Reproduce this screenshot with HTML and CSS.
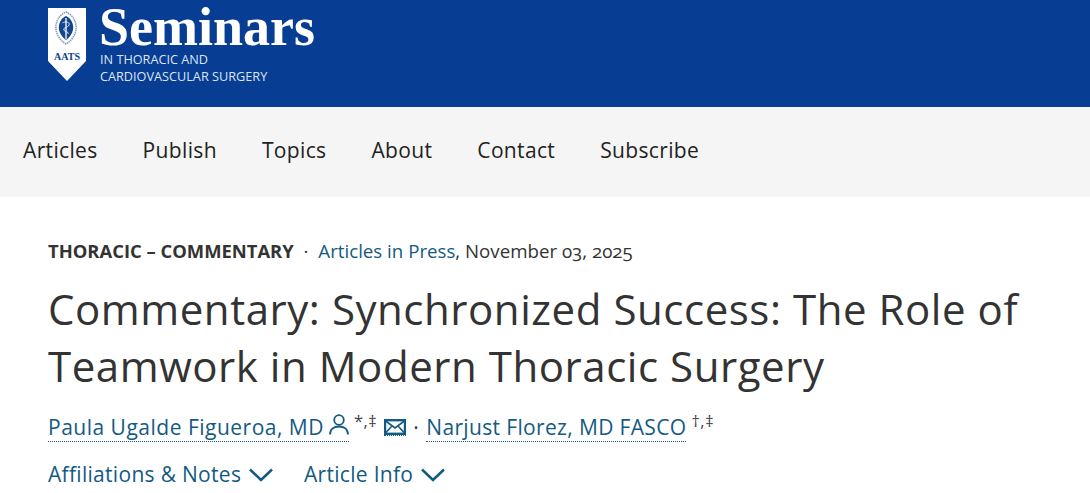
FILE: index.html
```html
<!DOCTYPE html>
<html lang="en">
<head>
  <meta charset="UTF-8" />
  <title>Commentary: Synchronized Success - Seminars</title>
  <link rel="stylesheet" href="styles.css">
</head>
<body>

  <header class="brand-bar">
    <a class="logo" href="#">
      <span class="shield">
        <svg class="shield-art" width="38" height="74" viewBox="0 0 38 74">
          <path d="M0 0H38V53L19 73L0 53Z" fill="#fff"/>
          <path d="M18 4C25 7 29 14 28 22C27 28 23 33 18 36C13 33 9 28 8 22C7 14 11 7 18 4Z" fill="#fff" stroke="#7f97c2" stroke-width="1.500" stroke-dasharray="1.500 .7"/>
          <path d="M18 8C23 10 26 16 25 22C24 26 21 30 18 32C15 30 12 26 11 22C10 16 13 10 18 8Z" fill="#12458f"/>
          <path d="M18 10V31" stroke="#fff" stroke-width="1.300"/>
          <path d="M14.500 15C17 13 22.500 14 21 17C19.500 20 15 19 16 22C17 25 21 23 20 26" fill="none" stroke="#e3eaf5" stroke-width="1"/>
        </svg>
        <span class="shield-text">AATS</span>
      </span>
      <span class="logo-words">
        <span class="logo-title">Seminars</span>
        <span class="logo-sub">IN THORACIC AND<br>CARDIOVASCULAR SURGERY</span>
      </span>
    </a>
  </header>

  <nav class="main-nav">
    <a href="#">Articles</a>
    <a href="#">Publish</a>
    <a href="#">Topics</a>
    <a href="#">About</a>
    <a href="#">Contact</a>
    <a href="#">Subscribe</a>
  </nav>

  <main class="article-head">
    <div class="meta">
      <span class="section">THORACIC – COMMENTARY</span>
      <span class="dot">·</span>
      <a href="#">Articles in Press</a>, November 03, 2025
    </div>

    <h1>Commentary: Synchronized Success: The Role of Teamwork in Modern Thoracic Surgery</h1>

    <div class="authors">
      <a class="author" href="#">Paula Ugalde Figueroa, MD
        <svg class="person" width="20" height="21" viewBox="0 0 20 21" fill="none" stroke="#135a83" stroke-width="1.800">
          <circle cx="10" cy="6" r="4.800"/>
          <path d="M1 20.500C1 15 5 12.500 10 12.500S19 15 19 20.500"/>
        </svg></a>
      <sup>*,‡</sup>
      <a class="mail" href="#">
        <svg width="22" height="16" viewBox="0 0 22 16" fill="none" stroke="#135a83" stroke-width="2.400">
          <rect x="1" y="1.200" width="20" height="13.600"/>
          <path d="M1 1.500L11 9L21 1.500M1 14.500L8 7M21 14.500L14 7" stroke-width="1.600"/>
        </svg>
      </a>
      <span class="dot">·</span>
      <a class="author author-tight" href="#">Narjust Florez, MD FASCO</a>
      <sup>†,‡</sup>
    </div>

    <div class="toggles">
      <a href="#">Affiliations &amp; Notes
        <svg class="chevron" width="24" height="14" viewBox="0 0 24 14" fill="none" stroke="#135a83" stroke-width="2.500"><path d="M1 1.500L12 12L23 1.500"/></svg></a>
      <a href="#">Article Info
        <svg class="chevron" width="24" height="14" viewBox="0 0 24 14" fill="none" stroke="#135a83" stroke-width="2.500"><path d="M1 1.500L12 12L23 1.500"/></svg></a>
    </div>
  </main>

</body>
</html>
```

FILE: styles.css
```css
body {
  margin: 0;
  height: 493px;
  overflow: hidden;
  background-color: #fff;
  color: #333;
  font-family: "Open Sans", sans-serif;
  font-feature-settings: "onum";
}

a {
  color: #135a83;
  text-decoration: none;
}

.brand-bar {
  height: 107px;
  padding: 8px 0 0 48px;
  box-sizing: border-box;
  background-color: #073d93;
}

.logo {
  display: flex;
  gap: 14px;
  color: #fff;
}

.shield {
  display: grid;
  width: 38px;
  height: 74px;
}

.shield-art,
.shield-text {
  grid-area: 1 / 1;
}

.shield-text {
  margin-top: 44px;
  font-family: "Liberation Serif", serif;
  font-size: 10px;
  font-weight: bold;
  line-height: 10px;
  text-align: center;
  color: #0a3f91;
}

.logo-words {
  display: flex;
  flex-direction: column;
}

.logo-title {
  margin-top: -3px;
  margin-left: -1px;
  font-family: "Liberation Serif", serif;
  font-size: 54px;
  font-weight: bold;
  line-height: 44px;
}

.logo-sub {
  margin-top: 2px;
  font-size: 12.700px;
  line-height: 17px;
  color: #dce5f3;
}

.main-nav {
  display: flex;
  align-items: center;
  gap: 45px;
  height: 86px;
  padding-bottom: 4px;
  padding-left: 23px;
  background-color: #f5f5f5;
  letter-spacing: 0.35px;
}

.main-nav a {
  font-size: 21px;
  color: #222;
}

.article-head {
  padding: 41px 48px 0;
}

.meta {
  font-size: 18.700px;
  line-height: 26px;
}

.section {
  font-weight: bold;
  font-size: 18.400px;
}

.dot {
  margin: 0 5px;
}

h1 {
  margin: 17px 0 0;
  font-size: 42px;
  font-weight: normal;
  line-height: 56.500px;
  letter-spacing: 0.55px;
}

.authors {
  display: flex;
  align-items: flex-start;
  gap: 5px;
  margin-top: 19px;
  font-size: 21px;
  line-height: 28px;
  letter-spacing: 0.5px;
}

.authors .dot {
  margin: 0 2px;
}

.author {
  border-bottom: 1px dotted #135a83;
}

.author-tight {
  letter-spacing: 0.35px;
}

.person {
  margin-left: -1px;
}

.mail {
  height: 22px;
  margin-left: 2px;
  border-bottom: 1px dotted #135a83;
}

sup {
  font-size: 16.500px;
  line-height: 16px;
  color: #444;
  vertical-align: baseline;
}

.toggles {
  display: flex;
  gap: 31px;
  margin-top: 18px;
  font-size: 21px;
  line-height: 28px;
  letter-spacing: 0.3px;
}

.chevron {
  margin-left: 2px;
}
```
